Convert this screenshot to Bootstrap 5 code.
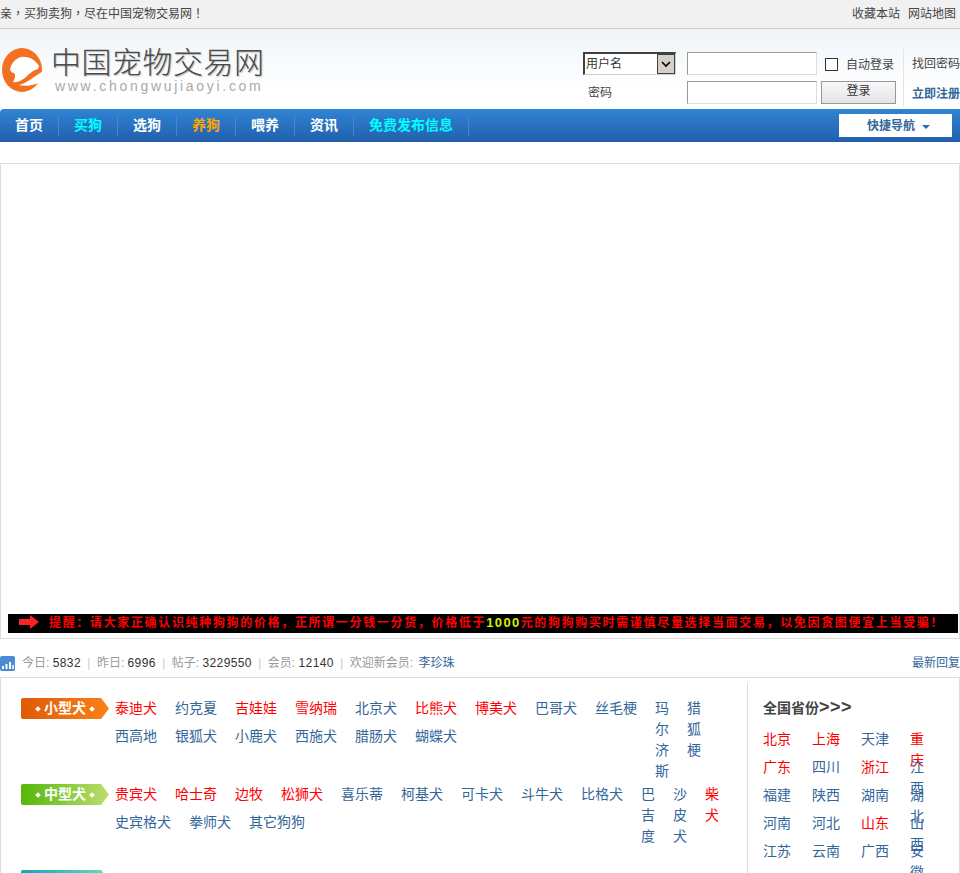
<!DOCTYPE html>
<html lang="zh-CN">
<head>
<meta charset="utf-8">
<title>中国宠物交易网</title>
<link href="https://cdn.jsdelivr.net/npm/bootstrap@5.3.0/dist/css/bootstrap.min.css" rel="stylesheet">
<style>
html,body{height:873px;overflow:hidden;margin:0;background:#fff}
body{font-family:"Liberation Sans","Noto Sans CJK SC",sans-serif;font-size:12px;color:#444;line-height:1.5}
a{text-decoration:none;color:#336699}
.pg{height:873px;overflow:hidden}
.topbar{height:29px;background:#f1f1f1;border-bottom:1px solid #ccc;color:#444;line-height:29px;padding-right:4px}
.topbar a{color:#444;margin-left:8px}
.slogan{font-family:"Liberation Sans","Noto Sans CJK TC",sans-serif}
.hd{height:80px;background:linear-gradient(180deg,#eef3f8 0,#f6f9fb 25px,#fff 62px)}
.logo-wrap{padding-top:18px;width:300px}
.logo-mark{width:44px;height:46px;flex:none;margin:1px 0 0 1px}
.logo-cn{font-size:30px;line-height:32px;letter-spacing:.5px;color:#4a4a4a;font-weight:300;text-shadow:1px 1px 1px #bbb;white-space:nowrap;margin-left:6px}
.logo-en{font-size:14px;line-height:14px;color:#aaa;letter-spacing:2.7px;margin-left:10px;white-space:nowrap}
.logn{width:377px;margin-top:23px;position:relative}
.fld-col{width:104px;flex:none}
.fake-sel{width:93px;height:23px;background:#d4d0c8;border-top:2px solid #404040;border-left:2px solid #404040;border-right:1px solid #d4d0c8;border-bottom:1px solid #d4d0c8;margin-bottom:6px}
.fake-sel span{flex:1;background:#fff;line-height:21px;padding-left:1px;color:#333}
.fake-arr{width:18px;background:#d4d0c8;border:1px solid #404040;display:flex;align-items:center;justify-content:center}
.pw-lbl{line-height:25px;padding-left:5px;color:#444;height:23px}
.tx{width:130px;height:23px;border:1px solid #ddd;border-top-color:#999;border-left-color:#999;background:#fff;padding:0;display:block;margin-bottom:6px}
.rem{margin-left:8px;height:25px;margin-bottom:4px}
.ck{width:13px;height:13px;border:1px solid #333;background:#fff;margin-right:8px;flex:none}
.go{width:75px;height:23px;margin-left:4px;padding:0 0 4px;border:1px solid #999;background:linear-gradient(180deg,#f8f8f8,#e4e4e4);font-size:12px;color:#333;line-height:16px}
.aux{border-left:1px solid #e4e4e4;width:57px;height:58px;margin-left:7px;margin-top:-3px;padding:0 0 0 8px;flex:none;white-space:nowrap;overflow:hidden}
.aux a{display:block;line-height:30px;color:#444}
.aux a.reg{color:#336699;font-weight:700}
.mainnav{height:33px;background:linear-gradient(180deg,#3084d4,#2260ad);border-top-left-radius:4px;border-bottom:1px solid #1f5aa3}
.mainnav a.it{display:block;width:59px;height:20px;line-height:18px;text-align:center;font-size:14px;font-weight:700;color:#fff;border-right:1px solid #4a85c5;white-space:nowrap;margin-top:7px}
.mainnav a.it.wide{width:115px}
.c-cy{color:#00ffff!important}
.c-or{color:#ffa500!important}
.quick{width:113px;height:23px;background:#fff;color:#336699;font-weight:700;line-height:25px;margin:5px 8px 0 0;padding-left:28px;white-space:nowrap}
.caret-d{display:inline-block;width:0;height:0;border:4px solid transparent;border-top:4px solid #1f6fb5;border-bottom:0;margin-left:7px;vertical-align:1px}
.ban{height:476px;margin-top:21px;border:1px solid #ddd;padding:450px 1px 4px 7px}
.band{height:19px;background:#000;color:#f00;font-weight:700;font-size:12px;line-height:18px;letter-spacing:1.66px;white-space:nowrap;overflow:hidden;padding-left:11px}
.band .hl{color:#d4f000;font-size:13px;letter-spacing:1.4px}
.band svg{margin-right:10px;vertical-align:-2px}
.stat{height:38px;padding-top:9px;color:#999}
.stat b{font-weight:400;color:#333;letter-spacing:.4px}
.stat i{font-style:normal;color:#ccc;margin:0 6.4px}
.stat a.nm{margin-left:2px}
.stat .bars{width:15px;height:15px;flex:none;margin-right:7px}
.statlink{line-height:30px}
.panel{border:1px solid #ddd;border-bottom:0;height:300px;overflow:hidden;padding-top:5px}
.left-side{width:746px;flex:none;padding:15px 0 0 20px}
.dog-row{height:86px}
.tag{width:88px;height:21px;flex:none;color:#fff;font-size:14px;font-weight:700;line-height:21px;text-align:center;clip-path:polygon(0 0,91% 0,100% 50%,91% 100%,0 100%);border-radius:2px 0 0 2px;white-space:nowrap;margin-right:6px}
.tag::before,.tag::after{content:"";display:inline-block;width:4px;height:4px;background:#fff;transform:rotate(45deg);vertical-align:2px;margin:0 4px}
.t1{background:linear-gradient(90deg,#e05a08,#fb8018)}
.t2{background:linear-gradient(90deg,#55b708,#bcde70)}
.t3{background:linear-gradient(90deg,#12a5c0,#66dcc0)}
.wl{font-size:14px;line-height:21px}
.wl a.w{display:block;margin:0 18px 7px 0;white-space:nowrap}
.wl a.nr{display:block;width:14px;margin-right:18px;flex:none;word-break:break-all}
.wrap1{width:540px;flex:none}
.wrap2{width:526px;flex:none}
.red{color:#f00!important}
.right-side{border-left:1px solid #ddd;flex:1;padding:15px 0 0 15px}
.r-title{font-size:14px;font-weight:700;line-height:21px;color:#444;margin-bottom:10px}
.r-title span{font-size:18px;line-height:18px;letter-spacing:.5px}
.prov{display:grid;grid-template-columns:49px 49px 49px 14px;grid-auto-rows:28px;font-size:14px;line-height:21px}
.prov a{display:block;white-space:nowrap}
.prov a.lst{white-space:normal;word-break:break-all;width:14px}
</style>
</head>
<body>
<div class="pg">
  <div class="topbar d-flex justify-content-between">
    <div class="slogan" lang="zh-TW">亲，买狗卖狗，尽在中国宠物交易网！</div>
    <div><a href="#">收藏本站</a><a href="#">网站地图</a></div>
  </div>
  <div class="hd d-flex justify-content-between">
    <div class="logo-wrap d-flex">
      <svg class="logo-mark" viewBox="0 0 44 46">
        <ellipse cx="21" cy="22" rx="20" ry="22" fill="#f37021"/>
        <path d="M9 21C11 13 18 8 24 9C30 9 35 13 38 18L37 21C33 22 29 25 26 28C22 32 16 35 12 34C14 31 15 27 13 25C11 25 10 24 9 21Z" fill="#fff"/>
        <path d="M44 22V31C37 37 26 39 18 37C26 35 34 28 44 22Z" fill="#fff"/>
      </svg>
      <div>
        <div class="logo-cn">中国宠物交易网</div>
        <div class="logo-en">www.chongwujiaoyi.com</div>
      </div>
    </div>
    <form class="logn d-flex" onsubmit="return false">
      <div class="fld-col">
        <div class="fake-sel d-flex"><span>用户名</span><div class="fake-arr"><svg width="10" height="7" viewBox="0 0 10 7"><path d="M1 1L5 5L9 1" fill="none" stroke="#000" stroke-width="1.6"/></svg></div></div>
        <div class="pw-lbl">密码</div>
      </div>
      <div>
        <input class="tx" type="text" aria-label="用户名">
        <input class="tx" type="password" aria-label="密码">
      </div>
      <div>
        <div class="rem d-flex align-items-center"><span class="ck"></span>自动登录</div>
        <button class="go">登录</button>
      </div>
      <div class="aux">
        <a href="#">找回密码</a>
        <a href="#" class="reg">立即注册</a>
      </div>
    </form>
  </div>
  <nav class="mainnav d-flex justify-content-between">
    <div class="d-flex">
      <a class="it" href="#">首页</a>
      <a class="it c-cy" href="#">买狗</a>
      <a class="it" href="#">选狗</a>
      <a class="it c-or" href="#">养狗</a>
      <a class="it" href="#">喂养</a>
      <a class="it" href="#">资讯</a>
      <a class="it wide c-cy" href="#">免费发布信息</a>
    </div>
    <div class="quick">快捷导航<span class="caret-d"></span></div>
  </nav>
  <div class="ban">
    <div class="band"><svg width="20" height="14" viewBox="0 0 20 14"><path d="M0 4H11V0L20 7L11 14V10H0Z" fill="#f22"/></svg>提醒：请大家正确认识纯种狗狗的价格，正所谓一分钱一分货，价格低于<span class="hl">1000</span>元的狗狗购买时需谨慎尽量选择当面交易，以免因贪图便宜上当受骗！</div>
  </div>
  <div class="stat d-flex justify-content-between align-items-start">
    <div class="d-flex align-items-center">
      <svg class="bars" viewBox="0 0 15 15"><rect width="15" height="15" rx="2" fill="#4a8bd2"/><rect x="2" y="10" width="2" height="3" fill="#fff"/><rect x="5.5" y="8" width="2" height="5" fill="#fff"/><rect x="9" y="6" width="2" height="7" fill="#fff"/><rect x="12.2" y="9" width="1.6" height="4" fill="#fff"/></svg>
      <span class="statlink">今日: <b>5832</b><i>|</i>昨日: <b>6996</b><i>|</i>帖子: <b>3229550</b><i>|</i>会员: <b>12140</b><i>|</i>欢迎新会员: <a class="nm" href="#">李珍珠</a></span>
    </div>
    <a class="statlink" href="#">最新回复</a>
  </div>
  <div class="panel d-flex">
    <div class="left-side">
      <div class="dog-row d-flex">
        <div class="tag t1">小型犬</div>
        <div class="wl d-flex">
          <div class="wrap1 d-flex flex-wrap align-content-start">
            <a class="w red" href="#">泰迪犬</a><a class="w" href="#">约克夏</a><a class="w red" href="#">吉娃娃</a><a class="w red" href="#">雪纳瑞</a><a class="w" href="#">北京犬</a><a class="w red" href="#">比熊犬</a><a class="w red" href="#">博美犬</a><a class="w" href="#">巴哥犬</a><a class="w" href="#">丝毛梗</a>
            <a class="w" href="#">西高地</a><a class="w" href="#">银狐犬</a><a class="w" href="#">小鹿犬</a><a class="w" href="#">西施犬</a><a class="w" href="#">腊肠犬</a><a class="w" href="#">蝴蝶犬</a>
          </div>
          <a class="nr" href="#">玛尔济斯</a><a class="nr" href="#">猎狐梗</a>
        </div>
      </div>
      <div class="dog-row d-flex">
        <div class="tag t2">中型犬</div>
        <div class="wl d-flex">
          <div class="wrap2 d-flex flex-wrap align-content-start">
            <a class="w red" href="#">贵宾犬</a><a class="w red" href="#">哈士奇</a><a class="w red" href="#">边牧</a><a class="w red" href="#">松狮犬</a><a class="w" href="#">喜乐蒂</a><a class="w" href="#">柯基犬</a><a class="w" href="#">可卡犬</a><a class="w" href="#">斗牛犬</a><a class="w" href="#">比格犬</a>
            <a class="w" href="#">史宾格犬</a><a class="w" href="#">拳师犬</a><a class="w" href="#">其它狗狗</a>
          </div>
          <a class="nr" href="#">巴吉度</a><a class="nr" href="#">沙皮犬</a><a class="nr red" href="#">柴犬</a>
        </div>
      </div>
      <div class="dog-row d-flex">
        <div class="tag t3">大型犬</div>
      </div>
    </div>
    <div class="right-side">
      <div class="r-title">全国省份<span>&gt;&gt;&gt;</span></div>
      <div class="prov">
        <a class="red" href="#">北京</a><a class="red" href="#">上海</a><a href="#">天津</a><a class="lst red" href="#">重庆</a>
        <a class="red" href="#">广东</a><a href="#">四川</a><a class="red" href="#">浙江</a><a class="lst" href="#">江西</a>
        <a href="#">福建</a><a href="#">陕西</a><a href="#">湖南</a><a class="lst" href="#">湖北</a>
        <a href="#">河南</a><a href="#">河北</a><a class="red" href="#">山东</a><a class="lst" href="#">山西</a>
        <a href="#">江苏</a><a href="#">云南</a><a href="#">广西</a><a class="lst" href="#">安徽</a>
      </div>
    </div>
  </div>
</div>
</body>
</html>
